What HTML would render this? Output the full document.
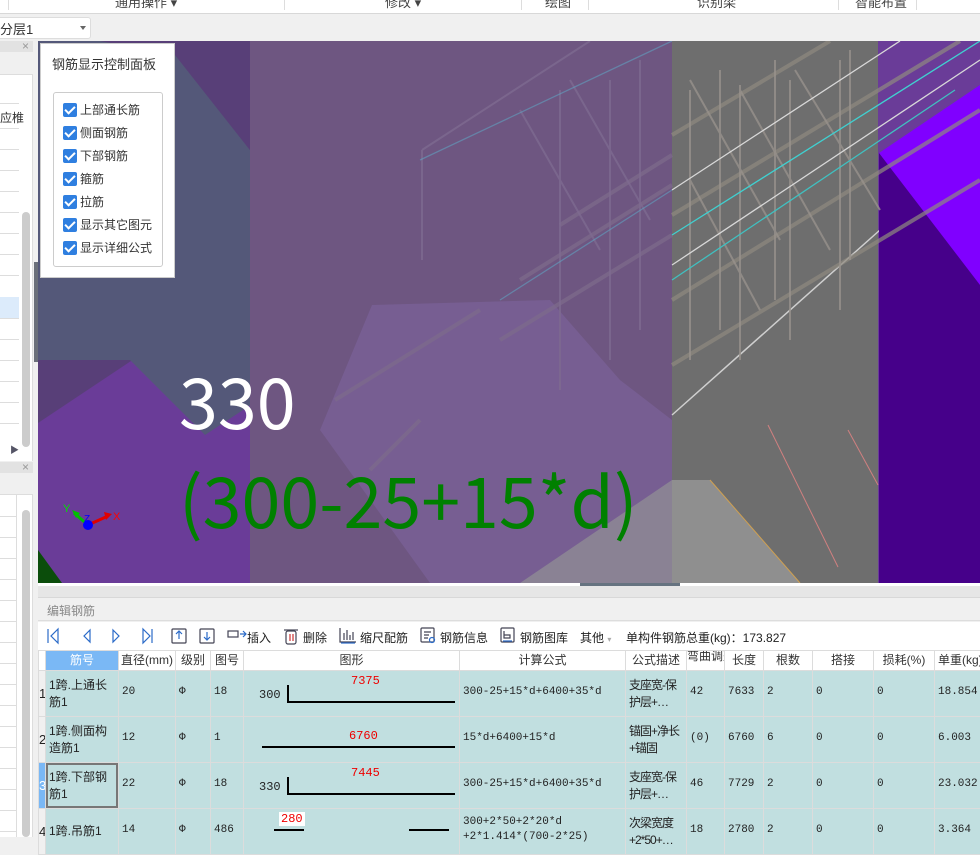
<!DOCTYPE html>
<html><head><meta charset="utf-8"><style>
*{margin:0;padding:0;box-sizing:border-box}
body{width:980px;height:837px;overflow:hidden;background:#f0f0f0;font-family:"Liberation Sans","Noto Sans CJK SC",sans-serif;font-size:12px;color:#333;position:relative}
.a{position:absolute}
.t{white-space:nowrap}
table{border-collapse:collapse;table-layout:fixed}
td{border:1px solid #dcdcdc;font-size:11px;color:#222;padding:0;vertical-align:top;overflow:hidden;white-space:nowrap}
td>div{overflow:hidden;position:relative;padding:0 3px}
tr.h td>div{height:19px;line-height:19px;text-align:center;font-size:12px;color:#333;background:#fff}
tr.r td>div{height:45px;background:#c1dfe0;font-family:"Liberation Mono","Noto Sans CJK SC",monospace;padding-top:15px}
td.n>div{background:#f0f0f0!important;padding:15px 0 0!important;text-align:center;font-size:13px;font-family:"Liberation Sans",sans-serif!important}
div.w{white-space:normal;line-height:17px;font-family:"Liberation Sans","Noto Sans CJK SC",sans-serif!important;font-size:12px;padding-top:6px!important}
.cb{position:absolute;left:63px;width:14px;height:14px;background:#2f7fe0;border-radius:2px}
.cb:after{content:"";position:absolute;left:4px;top:1px;width:4px;height:8px;border:solid #fff;border-width:0 2px 2px 0;transform:rotate(45deg)}
.cl{position:absolute;left:80px;font-size:12px;color:#333;font-family:"Noto Sans CJK SC",sans-serif}
</style></head><body>
<div class="a" style="left:0;top:0;width:980px;height:14px;background:#fff;border-bottom:1px solid #d8d8d8;overflow:hidden">
<div class="a t" style="left:115px;top:-8px;font-size:13px;color:#444">通用操作 ▾</div>
<div class="a t" style="left:385px;top:-8px;font-size:13px;color:#444">修改 ▾</div>
<div class="a t" style="left:545px;top:-8px;font-size:13px;color:#444">绘图</div>
<div class="a t" style="left:697px;top:-8px;font-size:13px;color:#444">识别梁</div>
<div class="a t" style="left:855px;top:-8px;font-size:13px;color:#444">智能布置</div>
<div class="a" style="left:8px;top:0;width:1px;height:10px;background:#ddd"></div>
<div class="a" style="left:284px;top:0;width:1px;height:10px;background:#ddd"></div>
<div class="a" style="left:521px;top:0;width:1px;height:10px;background:#ddd"></div>
<div class="a" style="left:588px;top:0;width:1px;height:10px;background:#ddd"></div>
<div class="a" style="left:838px;top:0;width:1px;height:10px;background:#ddd"></div>
<div class="a" style="left:916px;top:0;width:1px;height:10px;background:#ddd"></div>
</div>
<div class="a" style="left:-4px;top:17px;width:95px;height:22px;background:#fff;border:1px solid #ddd;border-radius:3px"></div>
<div class="a t" style="left:0;top:19px;font-size:13px;color:#333">分层1</div>
<div class="a" style="left:80px;top:26px;border:3px solid transparent;border-top:4px solid #666"></div>

<div class="a" style="left:0;top:41px;width:33px;height:420px;background:#fff;border-right:1px solid #ddd"></div>
<div class="a" style="left:0;top:41px;width:33px;height:11px;background:#e2e2e2"></div>
<div class="a t" style="left:22px;top:39px;font-size:12px;color:#999">×</div>
<div class="a" style="left:0;top:52px;width:33px;height:23px;background:#f0f0f0;border-bottom:1px solid #ddd"></div>
<div class="a t" style="left:0;top:109px;font-size:12px;color:#333">应椎</div>
<div class="a" style="left:0;top:297px;width:19px;height:21px;background:#dcebfb"></div>
<div class="a" style="left:22px;top:212px;width:8px;height:235px;background:#ccc;border-radius:4px"></div>
<div class="a t" style="left:10px;top:443px;font-size:9px;color:#556">▶</div>
<div class="a" style="left:0;top:462px;width:33px;height:375px;background:#fff;border-right:1px solid #ddd"></div>
<div class="a" style="left:0;top:462px;width:33px;height:11px;background:#e2e2e2"></div>
<div class="a t" style="left:22px;top:460px;font-size:12px;color:#999">×</div>
<div class="a" style="left:0;top:473px;width:33px;height:22px;background:#f0f0f0;border-bottom:1px solid #ddd"></div>
<div class="a" style="left:16px;top:495px;width:1px;height:342px;background:#ddd"></div>
<div class="a" style="left:22px;top:510px;width:8px;height:327px;background:#ccc;border-radius:4px"></div>
<svg class="a" style="left:0;top:0" width="33" height="837">
<g stroke="#ddd" stroke-width="1">
<line x1="0" y1="103.5" x2="19" y2="103.5"/><line x1="0" y1="128.5" x2="19" y2="128.5"/><line x1="0" y1="149.5" x2="19" y2="149.5"/><line x1="0" y1="170.5" x2="19" y2="170.5"/><line x1="0" y1="191.5" x2="19" y2="191.5"/><line x1="0" y1="212.5" x2="19" y2="212.5"/><line x1="0" y1="233.5" x2="19" y2="233.5"/><line x1="0" y1="254.5" x2="19" y2="254.5"/><line x1="0" y1="275.5" x2="19" y2="275.5"/><line x1="0" y1="318.5" x2="19" y2="318.5"/><line x1="0" y1="339.5" x2="19" y2="339.5"/><line x1="0" y1="360.5" x2="19" y2="360.5"/><line x1="0" y1="381.5" x2="19" y2="381.5"/><line x1="0" y1="402.5" x2="19" y2="402.5"/><line x1="0" y1="423.5" x2="19" y2="423.5"/>
<line x1="0" y1="516.5" x2="16" y2="516.5"/><line x1="0" y1="537.5" x2="16" y2="537.5"/><line x1="0" y1="558.5" x2="16" y2="558.5"/><line x1="0" y1="579.5" x2="16" y2="579.5"/><line x1="0" y1="600.5" x2="16" y2="600.5"/><line x1="0" y1="621.5" x2="16" y2="621.5"/><line x1="0" y1="642.5" x2="16" y2="642.5"/><line x1="0" y1="663.5" x2="16" y2="663.5"/><line x1="0" y1="684.5" x2="16" y2="684.5"/><line x1="0" y1="705.5" x2="16" y2="705.5"/><line x1="0" y1="726.5" x2="16" y2="726.5"/><line x1="0" y1="747.5" x2="16" y2="747.5"/><line x1="0" y1="768.5" x2="16" y2="768.5"/><line x1="0" y1="789.5" x2="16" y2="789.5"/><line x1="0" y1="810.5" x2="16" y2="810.5"/><line x1="0" y1="831.5" x2="16" y2="831.5"/>
</g></svg>
<div class="a" style="left:34px;top:41px;width:4px;height:545px;background:#f0f0f0"></div>
<div class="a" style="left:34px;top:262px;width:4px;height:100px;background:#6b707a"></div>

<svg class="a" style="left:38px;top:41px" width="942" height="542" viewBox="38 41 942 542">
<rect x="38" y="41" width="942" height="542" fill="#6a3c98"/>
<polygon points="38,41 250,41 250,350 137,357 38,423" fill="#583f78"/>
<polygon points="100,41 175,55 372,305 372,325 205,435 130,360 38,360 38,41" fill="#545879"/>
<rect x="250" y="41" width="422" height="542" fill="#6e5681"/>
<polygon points="372,305 550,300 620,380 672,420 672,583 430,583 320,430" fill="#775e92"/>
<polygon points="520,583 672,480 672,583" fill="#8a8294"/>
<rect x="672" y="41" width="206" height="542" fill="#6e6e6e"/>
<polygon points="672,480 710,480 800,583 672,583" fill="#8f8f8f"/>
<line x1="672" y1="415" x2="880" y2="230" stroke="#cfcfcf" stroke-width="1.5"/>
<line x1="710" y1="480" x2="800" y2="583" stroke="#d0a050" stroke-width="1"/>
<line x1="768" y1="425" x2="838" y2="567" stroke="#d08080" stroke-width="1"/>
<line x1="848" y1="430" x2="878" y2="485" stroke="#d08080" stroke-width="1"/>
<polygon points="879,153 980,85 980,583 879,583" fill="#8000ff"/>
<polygon points="879,153 980,285 980,583 879,583" fill="#46008a"/>
<polygon points="38,550 62,583 38,583" fill="#0b4d0b"/>
<g stroke="#8f8a80" stroke-width="4" opacity=".7">
<line x1="672" y1="365" x2="980" y2="180"/>
<line x1="672" y1="300" x2="980" y2="110"/>
<line x1="672" y1="215" x2="960" y2="41"/>
<line x1="672" y1="135" x2="830" y2="41"/>
</g>
<g stroke="#7e6c8c" stroke-width="4" opacity=".7">
<line x1="500" y1="340" x2="672" y2="235"/>
<line x1="520" y1="280" x2="672" y2="185"/>
<line x1="560" y1="225" x2="672" y2="155"/>
<line x1="335" y1="400" x2="480" y2="310"/>
<line x1="370" y1="470" x2="420" y2="420"/>
</g>
<g stroke="#98928c" stroke-width="2" fill="none" opacity=".8">
<line x1="690" y1="90" x2="690" y2="360"/><line x1="740" y1="85" x2="740" y2="360"/><line x1="790" y1="80" x2="790" y2="340"/><line x1="840" y1="60" x2="840" y2="310"/><line x1="720" y1="70" x2="720" y2="330"/><line x1="775" y1="60" x2="775" y2="300"/><line x1="850" y1="50" x2="850" y2="260"/>
<line x1="690" y1="80" x2="780" y2="240"/><line x1="740" y1="90" x2="830" y2="250"/><line x1="795" y1="70" x2="880" y2="210"/><line x1="690" y1="180" x2="760" y2="310"/>
</g>
<g stroke="#7e6a90" stroke-width="2" fill="none" opacity=".8">
<line x1="560" y1="90" x2="560" y2="390"/><line x1="610" y1="80" x2="610" y2="360"/><line x1="640" y1="60" x2="640" y2="330"/>
<line x1="520" y1="110" x2="600" y2="250"/><line x1="570" y1="80" x2="650" y2="220"/>
<line x1="422" y1="150" x2="590" y2="41"/><line x1="422" y1="150" x2="422" y2="260"/>
</g>
<g stroke-width="1.3" fill="none">
<line x1="672" y1="235" x2="980" y2="41" stroke="#40d0d0"/>
<line x1="672" y1="190" x2="900" y2="41" stroke="#d8d8d8"/>
<line x1="672" y1="265" x2="980" y2="60" stroke="#d8d8d8"/>
<line x1="672" y1="280" x2="955" y2="90" stroke="#40c0c0"/>
<line x1="420" y1="160" x2="672" y2="41" stroke="#60a0c0" opacity=".6"/>
<line x1="500" y1="300" x2="672" y2="190" stroke="#60a0c0" opacity=".6"/>
</g>
<line x1="88" y1="525" x2="74" y2="513" stroke="#00c000" stroke-width="3"/>
<line x1="88" y1="525" x2="108" y2="516" stroke="#e00000" stroke-width="3"/>
<polygon points="72,510 80,513 76,518" fill="#00c000"/><polygon points="112,514 104,512 106,520" fill="#e00000"/>
<circle cx="88" cy="525" r="5" fill="#0000ff"/>
<text x="63" y="512" font-size="11" fill="#00e000" font-family="Liberation Sans">Y</text>
<text x="84" y="522" font-size="10" fill="#0000ff" font-family="Liberation Sans">Z</text>
<text x="113" y="520" font-size="11" fill="#ff0000" font-family="Liberation Sans">X</text>
<text x="179" y="429" font-size="70" fill="#fff" font-family="Noto Sans CJK SC,sans-serif">330</text>
<text x="179" y="528" font-size="70" fill="#008000" font-family="Noto Sans CJK SC,sans-serif">(300-25+15*d)</text>
</svg>
<div class="a" style="left:38px;top:583px;width:942px;height:3px;background:#fff"></div>
<div class="a" style="left:580px;top:583px;width:100px;height:4px;background:#667380"></div>

<div class="a" style="left:40px;top:43px;width:135px;height:235px;background:#fff;border:1px solid #ccc"></div>
<div class="a t" style="left:52px;top:54px;font-size:13px;color:#333;font-family:'Noto Sans CJK SC',sans-serif">钢筋显示控制面板</div>
<div class="a" style="left:53px;top:92px;width:110px;height:175px;border:1px solid #ccc;border-radius:3px"></div>
<div class="cb" style="top:103px"></div><div class="cl" style="top:101px">上部通长筋</div>
<div class="cb" style="top:126px"></div><div class="cl" style="top:124px">侧面钢筋</div>
<div class="cb" style="top:149px"></div><div class="cl" style="top:147px">下部钢筋</div>
<div class="cb" style="top:172px"></div><div class="cl" style="top:170px">箍筋</div>
<div class="cb" style="top:195px"></div><div class="cl" style="top:193px">拉筋</div>
<div class="cb" style="top:218px"></div><div class="cl" style="top:216px">显示其它图元</div>
<div class="cb" style="top:241px"></div><div class="cl" style="top:239px">显示详细公式</div>

<div class="a" style="left:38px;top:586px;width:942px;height:12px;background:#e6e6e6;border-bottom:1px solid #d8d8d8"></div>
<div class="a" style="left:38px;top:599px;width:942px;height:22px;background:#f0f0f0;border-bottom:1px solid #ddd"></div>
<div class="a t" style="left:47px;top:602px;font-size:12px;color:#888">编辑钢筋</div>
<div class="a" style="left:38px;top:622px;width:942px;height:28px;background:#fff"></div>
<svg class="a" style="left:38px;top:622px" width="260" height="28" fill="none" stroke="#2a6ac8" stroke-width="1.2">
<line x1="10" y1="7" x2="10" y2="21"/><path d="M20 7 L13 14 L20 21Z"/>
<path d="M52 8 L46 14 L52 20Z"/>
<path d="M75 8 L81 14 L75 20Z"/>
<path d="M105 7 L112 14 L105 21Z"/><line x1="114" y1="7" x2="114" y2="21"/>
<rect x="134" y="7" width="14" height="14" rx="1" stroke="#445"/><path d="M141 17V10M138 12L141 9L144 12"/>
<rect x="162" y="7" width="14" height="14" rx="1" stroke="#445"/><path d="M169 10V17M166 15L169 18L172 15"/>
<rect x="190" y="9" width="10" height="6" stroke="#445"/><path d="M202 12H208M205 9L208 12L205 15"/>
<rect x="248" y="9" width="10" height="13" rx="2" stroke="#445"/><line x1="246" y1="8" x2="260" y2="8" stroke="#445"/><line x1="252" y1="12" x2="252" y2="19" stroke="#c33"/><line x1="255" y1="12" x2="255" y2="19" stroke="#c33"/>
</svg>
<div class="a t" style="left:247px;top:629px;font-size:12px;color:#222">插入</div>
<div class="a t" style="left:303px;top:629px;font-size:12px;color:#222">删除</div>
<svg class="a" style="left:339px;top:627px" width="18" height="18" fill="none" stroke="#445" stroke-width="1.2"><path d="M1 1V15H17M5 6V13M8 3V13M11 8V13M14 5V13"/><path d="M2 16H16" stroke="#2a6ac8"/></svg>
<div class="a t" style="left:360px;top:629px;font-size:12px;color:#222">缩尺配筋</div>
<svg class="a" style="left:420px;top:627px" width="16" height="17" fill="none" stroke="#445" stroke-width="1.2"><rect x="1" y="1" width="13" height="14" rx="1"/><path d="M4 5H11M4 8H9M4 11H8"/><circle cx="12" cy="13" r="2.5" stroke="#2a6ac8"/></svg>
<div class="a t" style="left:440px;top:629px;font-size:12px;color:#222">钢筋信息</div>
<svg class="a" style="left:500px;top:627px" width="16" height="17" fill="none" stroke="#445" stroke-width="1.2"><rect x="1" y="1" width="13" height="14" rx="1"/><path d="M4 4V11H10V8H4"/><path d="M3 14H12" stroke="#2a6ac8"/></svg>
<div class="a t" style="left:520px;top:629px;font-size:12px;color:#222">钢筋图库</div>
<div class="a t" style="left:580px;top:629px;font-size:12px;color:#222">其他 <span style="color:#aaa;font-size:8px">▾</span></div>
<div class="a t" style="left:626px;top:629px;font-size:12px;color:#222">单构件钢筋总重(kg)：173.827</div>

<table class="a" style="left:38px;top:650px;width:960px">
<colgroup><col style="width:7px"><col style="width:73px"><col style="width:57px"><col style="width:35px"><col style="width:33px"><col style="width:216px"><col style="width:166px"><col style="width:61px"><col style="width:38px"><col style="width:39px"><col style="width:49px"><col style="width:61px"><col style="width:61px"><col style="width:64px"></colgroup>
<tr class="h"><td><div></div></td><td><div style="background:#7ab8f5;color:#fff">筋号</div></td><td><div style="padding:0">直径(mm)</div></td><td><div>级别</div></td><td><div>图号</div></td><td><div>图形</div></td><td><div>计算公式</div></td><td><div style="padding:0">公式描述</div></td><td><div style="line-height:11px;padding:0">弯曲调整</div></td><td><div>长度</div></td><td><div>根数</div></td><td><div>搭接</div></td><td><div>损耗(%)</div></td><td><div style="text-align:left">单重(kg)</div></td></tr>
<tr class="r"><td class="n"><div>1</div></td><td><div class="w">1跨.上通长筋1</div></td><td><div>20</div></td><td><div>Ф</div></td><td><div>18</div></td><td><div><span class="a" style="left:15px;top:17px;font-size:12px">300</span><span class="a" style="left:43px;top:14px;width:168px;height:18px;border-left:2px solid #000;border-bottom:2px solid #000"></span><span class="a" style="left:107px;top:3px;color:#e00;font-size:12px">7375</span></div></td><td><div>300-25+15*d+6400+35*d</div></td><td><div class="w" style="letter-spacing:-1px">支座宽-保护层+…</div></td><td><div>42</div></td><td><div>7633</div></td><td><div>2</div></td><td><div>0</div></td><td><div>0</div></td><td><div>18.854</div></td></tr>
<tr class="r"><td class="n"><div>2</div></td><td><div class="w">1跨.侧面构造筋1</div></td><td><div>12</div></td><td><div>Ф</div></td><td><div>1</div></td><td><div><span class="a" style="left:18px;top:29px;width:193px;height:2px;background:#000"></span><span class="a" style="left:105px;top:12px;color:#e00;font-size:12px">6760</span></div></td><td><div>15*d+6400+15*d</div></td><td><div class="w" style="letter-spacing:-1px">锚固+净长+锚固</div></td><td><div>(0)</div></td><td><div>6760</div></td><td><div>6</div></td><td><div>0</div></td><td><div>0</div></td><td><div>6.003</div></td></tr>
<tr class="r"><td class="n"><div style="background:#7ab8f5!important;color:#fff">3</div></td><td><div class="w" style="outline:2px solid #777;outline-offset:-2px">1跨.下部钢筋1</div></td><td><div>22</div></td><td><div>Ф</div></td><td><div>18</div></td><td><div><span class="a" style="left:15px;top:17px;font-size:12px">330</span><span class="a" style="left:43px;top:14px;width:168px;height:18px;border-left:2px solid #000;border-bottom:2px solid #000"></span><span class="a" style="left:107px;top:3px;color:#e00;font-size:12px">7445</span></div></td><td><div>300-25+15*d+6400+35*d</div></td><td><div class="w" style="letter-spacing:-1px">支座宽-保护层+…</div></td><td><div>46</div></td><td><div>7729</div></td><td><div>2</div></td><td><div>0</div></td><td><div>0</div></td><td><div>23.032</div></td></tr>
<tr class="r"><td class="n"><div>4</div></td><td><div class="w" style="padding-top:14px!important">1跨.吊筋1</div></td><td><div>14</div></td><td><div>Ф</div></td><td><div>486</div></td><td><div><span class="a" style="left:35px;top:3px;color:#e00;background:#fff;font-size:12px;padding:0 2px">280</span><span class="a" style="left:30px;top:20px;width:30px;height:2px;background:#000"></span><span class="a" style="left:165px;top:20px;width:40px;height:2px;background:#000"></span></div></td><td><div style="padding-top:6px;line-height:15px">300+2*50+2*20*d<br>+2*1.414*(700-2*25)</div></td><td><div class="w" style="letter-spacing:-1px">次梁宽度+2*50+…</div></td><td><div>18</div></td><td><div>2780</div></td><td><div>2</div></td><td><div>0</div></td><td><div>0</div></td><td><div>3.364</div></td></tr>
</table>
</body></html>
